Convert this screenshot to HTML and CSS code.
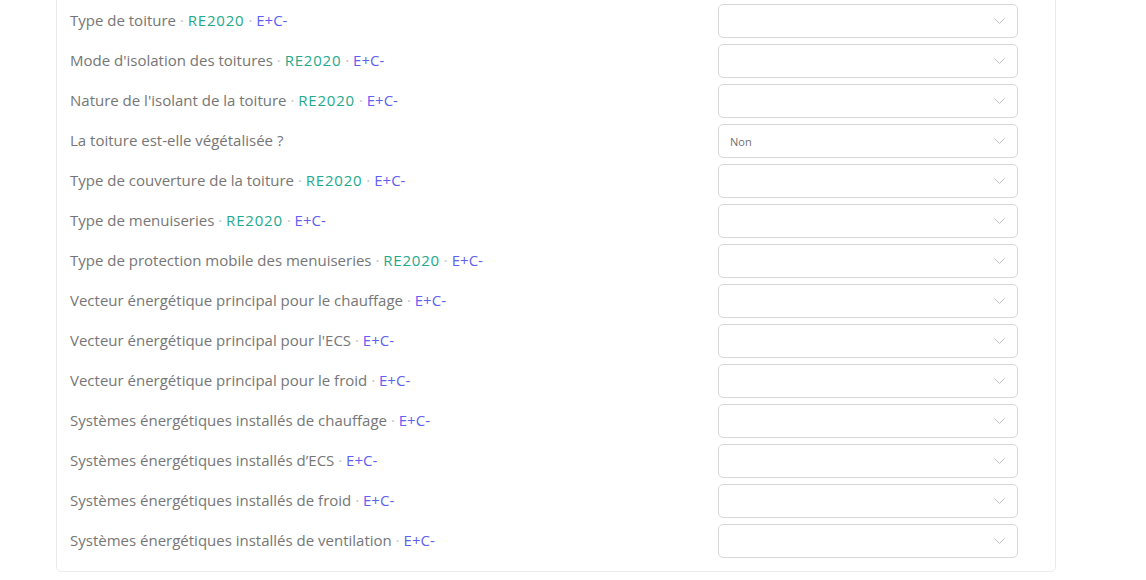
FILE: index.html
```html
<!DOCTYPE html>
<html lang="fr">
<head>
    <meta charset="UTF-8">
    <meta name="viewport" content="width=device-width, initial-scale=1.0">
    <title>Enveloppe et systèmes</title>
    <link rel="stylesheet" href="styles.css">
</head>
<body>
  <div class="card">

    <div class="row">
      <label>Type de toiture <span class="dot">·</span> <span class="re">RE2020</span> <span class="dot">·</span> <span class="ec">E+C-</span></label>
      <div class="select"><span class="value"></span><svg class="chev" width="11" height="6" viewBox="0 0 11 6"><path d="M0.5 0.5 L5.5 5.5 L10.5 0.5"/></svg></div>
    </div>

    <div class="row">
      <label>Mode d'isolation des toitures <span class="dot">·</span> <span class="re">RE2020</span> <span class="dot">·</span> <span class="ec">E+C-</span></label>
      <div class="select"><span class="value"></span><svg class="chev" width="11" height="6" viewBox="0 0 11 6"><path d="M0.5 0.5 L5.5 5.5 L10.5 0.5"/></svg></div>
    </div>

    <div class="row">
      <label>Nature de l'isolant de la toiture <span class="dot">·</span> <span class="re">RE2020</span> <span class="dot">·</span> <span class="ec">E+C-</span></label>
      <div class="select"><span class="value"></span><svg class="chev" width="11" height="6" viewBox="0 0 11 6"><path d="M0.5 0.5 L5.5 5.5 L10.5 0.5"/></svg></div>
    </div>

    <div class="row">
      <label>La toiture est-elle végétalisée ?</label>
      <div class="select"><span class="value">Non</span><svg class="chev" width="11" height="6" viewBox="0 0 11 6"><path d="M0.5 0.5 L5.5 5.5 L10.5 0.5"/></svg></div>
    </div>

    <div class="row">
      <label>Type de couverture de la toiture <span class="dot">·</span> <span class="re">RE2020</span> <span class="dot">·</span> <span class="ec">E+C-</span></label>
      <div class="select"><span class="value"></span><svg class="chev" width="11" height="6" viewBox="0 0 11 6"><path d="M0.5 0.5 L5.5 5.5 L10.5 0.5"/></svg></div>
    </div>

    <div class="row">
      <label>Type de menuiseries <span class="dot">·</span> <span class="re">RE2020</span> <span class="dot">·</span> <span class="ec">E+C-</span></label>
      <div class="select"><span class="value"></span><svg class="chev" width="11" height="6" viewBox="0 0 11 6"><path d="M0.5 0.5 L5.5 5.5 L10.5 0.5"/></svg></div>
    </div>

    <div class="row">
      <label>Type de protection mobile des menuiseries <span class="dot">·</span> <span class="re">RE2020</span> <span class="dot">·</span> <span class="ec">E+C-</span></label>
      <div class="select"><span class="value"></span><svg class="chev" width="11" height="6" viewBox="0 0 11 6"><path d="M0.5 0.5 L5.5 5.5 L10.5 0.5"/></svg></div>
    </div>

    <div class="row">
      <label>Vecteur énergétique principal pour le chauffage <span class="dot">·</span> <span class="ec">E+C-</span></label>
      <div class="select"><span class="value"></span><svg class="chev" width="11" height="6" viewBox="0 0 11 6"><path d="M0.5 0.5 L5.5 5.5 L10.5 0.5"/></svg></div>
    </div>

    <div class="row">
      <label>Vecteur énergétique principal pour l'ECS <span class="dot">·</span> <span class="ec">E+C-</span></label>
      <div class="select"><span class="value"></span><svg class="chev" width="11" height="6" viewBox="0 0 11 6"><path d="M0.5 0.5 L5.5 5.5 L10.5 0.5"/></svg></div>
    </div>

    <div class="row">
      <label>Vecteur énergétique principal pour le froid <span class="dot">·</span> <span class="ec">E+C-</span></label>
      <div class="select"><span class="value"></span><svg class="chev" width="11" height="6" viewBox="0 0 11 6"><path d="M0.5 0.5 L5.5 5.5 L10.5 0.5"/></svg></div>
    </div>

    <div class="row">
      <label>Systèmes énergétiques installés de chauffage <span class="dot">·</span> <span class="ec">E+C-</span></label>
      <div class="select"><span class="value"></span><svg class="chev" width="11" height="6" viewBox="0 0 11 6"><path d="M0.5 0.5 L5.5 5.5 L10.5 0.5"/></svg></div>
    </div>

    <div class="row">
      <label>Systèmes énergétiques installés d’ECS <span class="dot">·</span> <span class="ec">E+C-</span></label>
      <div class="select"><span class="value"></span><svg class="chev" width="11" height="6" viewBox="0 0 11 6"><path d="M0.5 0.5 L5.5 5.5 L10.5 0.5"/></svg></div>
    </div>

    <div class="row">
      <label>Systèmes énergétiques installés de froid <span class="dot">·</span> <span class="ec">E+C-</span></label>
      <div class="select"><span class="value"></span><svg class="chev" width="11" height="6" viewBox="0 0 11 6"><path d="M0.5 0.5 L5.5 5.5 L10.5 0.5"/></svg></div>
    </div>

    <div class="row">
      <label>Systèmes énergétiques installés de ventilation <span class="dot">·</span> <span class="ec">E+C-</span></label>
      <div class="select"><span class="value"></span><svg class="chev" width="11" height="6" viewBox="0 0 11 6"><path d="M0.5 0.5 L5.5 5.5 L10.5 0.5"/></svg></div>
    </div>

  </div>
</body>
</html>
```

FILE: styles.css
```css
* {
   box-sizing: border-box;
   font-family: 'Open Sans', 'DejaVu Sans', sans-serif;
}

body {
   margin: 0;
   background: #fff;
}

.card {
   width: 1000px;
   margin: -21px 0 0 56px;
   padding: 24px 37px 13px 13px;
   border: 1px solid #ebebeb;
   border-radius: 5px;
   display: flex;
   flex-direction: column;
   gap: 6px;
}

.row {
   display: flex;
   align-items: center;
   justify-content: space-between;
   height: 34px;
}

label {
   font-size: 15px;
   line-height: 20px;
   margin-top: -2px;
   color: #767676;
}

.dot {
   color: #c4c4c4;
}

.re {
   color: #22a98c;
   letter-spacing: 0.8px;
}

.ec {
   color: #6060f0;
}

.select {
   width: 300px;
   height: 34px;
   border: 1px solid #d8d8d8;
   border-radius: 5px;
   display: flex;
   align-items: center;
   justify-content: space-between;
   padding: 0 12px 0 11px;
}

.value {
   font-size: 11px;
   color: #707070;
}

.chev path {
   fill: none;
   stroke: #bdbdbd;
   stroke-width: 1;
}
```
